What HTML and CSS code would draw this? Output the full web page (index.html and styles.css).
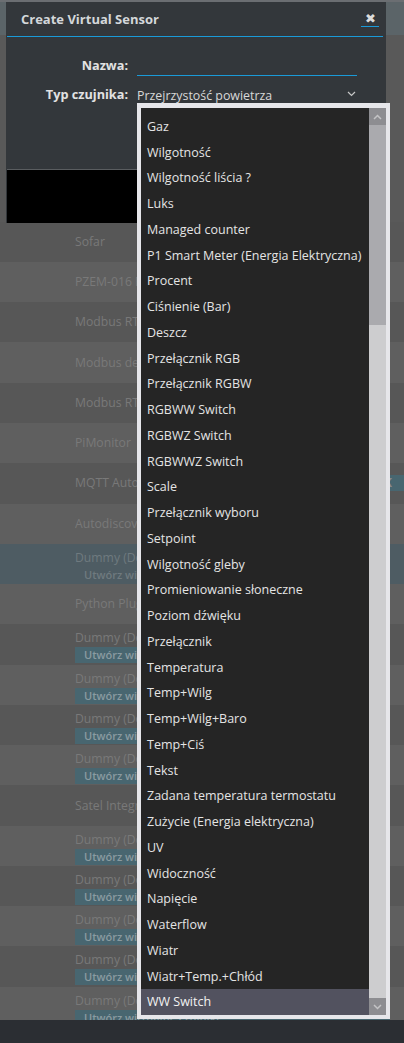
FILE: index.html
```html
<!DOCTYPE html>
<html lang="pl">
<head>
  <meta charset="UTF-8">
  <meta name="viewport" content="width=device-width, initial-scale=1.0">
  <title>Create Virtual Sensor</title>
  <link rel="stylesheet" href="styles.css">
</head>
<body>
  <div class="topline"></div>

  <main class="page">
    <div class="page-head"></div>
    <div class="filler"></div>

    <div class="row dark"><div class="name">Sofar</div></div>
    <div class="row light"><div class="name">PZEM-016 RS485</div></div>
    <div class="row dark"><div class="name">Modbus RTU</div></div>
    <div class="row light"><div class="name">Modbus device</div></div>
    <div class="row dark"><div class="name">Modbus RTU</div></div>
    <div class="row light"><div class="name">PiMonitor</div></div>
    <div class="row dark"><div class="name">MQTT Autodiscovery</div><span class="tag">K</span></div>
    <div class="row light"><div class="name">Autodiscovery</div></div>
    <div class="row active two"><div class="name">Dummy (Does nothing)<span class="badge">Utwórz wirtualne czujniki</span></div></div>
    <div class="row light"><div class="name">Python Plugin</div></div>
    <div class="row dark two"><div class="name">Dummy (Does nothing)<span class="badge">Utwórz wirtualne czujniki</span></div></div>
    <div class="row light two"><div class="name">Dummy (Does nothing)<span class="badge">Utwórz wirtualne czujniki</span></div></div>
    <div class="row dark two"><div class="name">Dummy (Does nothing)<span class="badge">Utwórz wirtualne czujniki</span></div></div>
    <div class="row light two"><div class="name">Dummy (Does nothing)<span class="badge">Utwórz wirtualne czujniki</span></div></div>
    <div class="row dark"><div class="name">Satel Integra</div></div>
    <div class="row light two"><div class="name">Dummy (Does nothing)<span class="badge">Utwórz wirtualne czujniki</span></div></div>
    <div class="row dark two"><div class="name">Dummy (Does nothing)<span class="badge">Utwórz wirtualne czujniki</span></div></div>
    <div class="row light two"><div class="name">Dummy (Does nothing)<span class="badge">Utwórz wirtualne czujniki</span></div></div>
    <div class="row dark two"><div class="name">Dummy (Does nothing)<span class="badge">Utwórz wirtualne czujniki</span></div></div>
    <div class="row light two"><div class="name">Dummy (Does nothing)<span class="badge">Utwórz wirtualne czujniki</span></div></div>
  </main>

  <footer class="bottom-bar"></footer>

  <!-- okno dialogowe -->
  <div class="modal">
    <div class="modal-head">
      <span class="modal-title">Create Virtual Sensor</span>
      <span class="close">&#x2716;</span>
    </div>
    <div class="modal-body">
      <label class="label">Nazwa:</label>
      <div class="input"></div>
      <label class="label">Typ czujnika:</label>
      <div class="select">
        <span>Przejrzystość powietrza</span>
        <svg width="9" height="6" viewBox="0 0 9 6"><polyline points="1,1 4.5,4.5 8,1" fill="none" stroke="#c8c8c8" stroke-width="1.2"/></svg>
      </div>
    </div>
    <div class="modal-foot"></div>
  </div>

  <!-- rozwinięta lista typów -->
  <div class="options">
    <ul class="option-list">
      <li>Gaz</li>
      <li>Wilgotność</li>
      <li>Wilgotność liścia ?</li>
      <li>Luks</li>
      <li>Managed counter</li>
      <li>P1 Smart Meter (Energia Elektryczna)</li>
      <li>Procent</li>
      <li>Ciśnienie (Bar)</li>
      <li>Deszcz</li>
      <li>Przełącznik RGB</li>
      <li>Przełącznik RGBW</li>
      <li>RGBWW Switch</li>
      <li>RGBWZ Switch</li>
      <li>RGBWWZ Switch</li>
      <li>Scale</li>
      <li>Przełącznik wyboru</li>
      <li>Setpoint</li>
      <li>Wilgotność gleby</li>
      <li>Promieniowanie słoneczne</li>
      <li>Poziom dźwięku</li>
      <li>Przełącznik</li>
      <li>Temperatura</li>
      <li>Temp+Wilg</li>
      <li>Temp+Wilg+Baro</li>
      <li>Temp+Ciś</li>
      <li>Tekst</li>
      <li>Zadana temperatura termostatu</li>
      <li>Zużycie (Energia elektryczna)</li>
      <li>UV</li>
      <li>Widoczność</li>
      <li>Napięcie</li>
      <li>Waterflow</li>
      <li>Wiatr</li>
      <li>Wiatr+Temp.+Chłód</li>
      <li class="selected">WW Switch</li>
    </ul>
    <div class="scrollbar">
      <div class="scroll-btn">
        <svg width="9" height="6" viewBox="0 0 9 6"><polyline points="1,5 4.5,1.5 8,5" fill="none" stroke="#c4c4c6" stroke-width="1.5"/></svg>
      </div>
      <div class="thumb"></div>
      <div class="track"></div>
      <div class="scroll-btn">
        <svg width="9" height="6" viewBox="0 0 9 6"><polyline points="1,1 4.5,4.5 8,1" fill="none" stroke="#c4c4c6" stroke-width="1.5"/></svg>
      </div>
    </div>
  </div>
</body>
</html>
```

FILE: styles.css
```css
body {
  margin: 0;
  height: 1043px;
  display: flex;
  flex-direction: column;
  overflow: hidden;
  font-family: "Open Sans", sans-serif;
  background-color: #575757;
}

.topline {
  height: 2px;
  background-color: #6b6e72;
}

.page {
  flex: 1;
  overflow: hidden;
}

.page-head {
  height: 33px;
  background-color: #5b6468;
}

.filler {
  height: 186.7px;
  background-color: #595959;
}

.row {
  height: 40.28px;
  display: flex;
  align-items: center;
  color: #797979;
  font-size: 12.2px;
}

.row.dark {
  background-color: #575757;
}

.row.light {
  background-color: #5f5f5f;
}

.row.active {
  background-color: #4e5c63;
  color: #6f7a7f;
}

.row.two {
  align-items: flex-start;
  padding-top: 6px;
  box-sizing: border-box;
}

.name {
  margin-left: 75px;
  width: 315px;
  overflow: hidden;
  white-space: nowrap;
  line-height: 16px;
}

.badge {
  display: block;
  margin-top: 1px;
  height: 16px;
  line-height: 16px;
  padding-left: 9px;
  background-color: #486670;
  color: #8a9ba1;
  font-size: 11px;
  font-weight: 600;
}

.row.active .badge {
  background-color: #4e5c63;
  color: #6f7a7f;
}

.tag {
  height: 16px;
  line-height: 16px;
  padding: 0 12px 0 6px;
  background-color: #486670;
  color: #8a8a8a;
  font-size: 12px;
  font-weight: 700;
}

.bottom-bar {
  height: 23px;
  background-color: #2b2e33;
}

/* okno dialogowe */
.modal {
  position: absolute;
  top: 2px;
  left: 6px;
  width: 380px;
  height: 221px;
  background-color: #33373b;
  display: flex;
  flex-direction: column;
}

.modal-head {
  height: 34px;
  margin: 0 3px 0 1px;
  padding-left: 14px;
  display: flex;
  align-items: center;
  justify-content: space-between;
  border-bottom: 1.5px solid #1a9ad8;
}

.modal-title {
  color: #d4d7da;
  font-size: 13px;
  font-weight: 700;
}

.close {
  width: 18px;
  margin-right: 4px;
  text-align: center;
  color: #dcdcdc;
  font-size: 13px;
  line-height: 15px;
  border-bottom: 1.5px solid #1a9ad8;
}

.modal-body {
  flex: 1;
  display: grid;
  grid-template-columns: 122px 220px;
  grid-template-rows: 21px 22px;
  column-gap: 9px;
  row-gap: 8px;
  align-content: start;
  padding-top: 18px;
}

.label {
  text-align: right;
  color: #e2e2e2;
  font-size: 12.7px;
  font-weight: 700;
  line-height: 20px;
}

.input {
  border-bottom: 1px solid #1a9ad8;
}

.select {
  display: flex;
  justify-content: space-between;
  align-items: center;
  color: #d8d8d8;
  font-size: 12.4px;
  padding-right: 1px;
}

.select svg {
  margin-top: -2px;
}

.modal-foot {
  height: 53px;
  margin: 0 1px;
  background-color: #000;
  border-top: 1px solid #5a5d60;
}

/* rozwinięta lista */
.options {
  position: absolute;
  top: 103px;
  left: 137px;
  width: 253px;
  height: 916px;
  box-sizing: border-box;
  border: 4px solid #e6e6ea;
  border-top-width: 5px;
  display: flex;
}

.option-list {
  flex: 1;
  margin: 0;
  padding: 0;
  list-style: none;
  background-color: #252525;
  overflow: hidden;
  display: flex;
  flex-direction: column;
  justify-content: flex-end;
}

.option-list li {
  flex-shrink: 0;
  height: 25.76px;
  line-height: 25.76px;
  padding-left: 6px;
  color: #e4e4e4;
  font-size: 12.5px;
  white-space: nowrap;
}

.option-list li.selected {
  background-color: #52525f;
  color: #f2f2f2;
}

.scrollbar {
  width: 17px;
  display: flex;
  flex-direction: column;
  background-color: #cdcdcf;
}

.scroll-btn {
  height: 17px;
  display: flex;
  align-items: center;
  justify-content: center;
  background-color: #8d8d91;
}

.thumb {
  height: 200px;
  background-color: #aaaaae;
}

.track {
  flex: 1;
}
```
